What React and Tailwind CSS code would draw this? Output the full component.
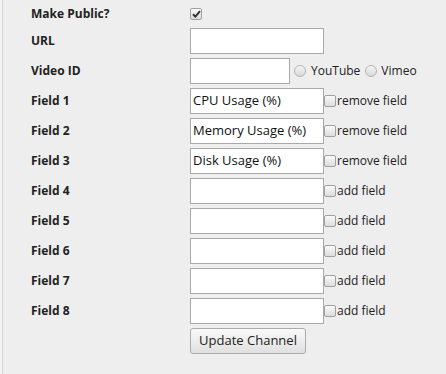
import React from "react";

const font = { fontFamily: '"Open Sans", sans-serif' };

function Box({ checked }) {
  return (
    <span className="inline-flex h-[12px] w-[12px] shrink-0 items-center justify-center rounded-[2px] border border-[#a0a0a0] bg-gradient-to-b from-[#fafafa] to-[#dcdcdc]">
      {checked && (
        <svg width="9" height="8" viewBox="0 0 9 8">
          <path d="M1 4.2 L3.4 6.6 L8 1.2" stroke="#333" strokeWidth="2" fill="none" />
        </svg>
      )}
    </span>
  );
}

function Radio() {
  return (
    <span className="inline-block h-[12px] w-[12px] shrink-0 rounded-full border border-[#b4b4b4] bg-gradient-to-b from-[#f6f6f6] to-[#d8d8d8]" />
  );
}

function Label({ children }) {
  return (
    <div className="w-[159px] shrink-0 text-[12px] font-bold text-[#222]">{children}</div>
  );
}

function TextBox({ value = "", w = "w-[134px]" }) {
  return (
    <div
      className={`${w} flex h-[26px] shrink-0 items-center border border-[#a9a9a9] bg-white pl-[2px] text-[13px] text-[#111]`}
    >
      {value}
    </div>
  );
}

const fields = [
  { v: "CPU Usage (%)", a: "remove field" },
  { v: "Memory Usage (%)", a: "remove field" },
  { v: "Disk Usage (%)", a: "remove field" },
  { v: "", a: "add field" },
  { v: "", a: "add field" },
  { v: "", a: "add field" },
  { v: "", a: "add field" },
  { v: "", a: "add field" },
];

export default function App() {
  return (
    <div className="min-h-screen bg-[#f4f4f4] pl-[2px]" style={font}>
      <div className="min-h-screen border-l border-[#d6d6d6] bg-[#eeeeee] pl-[28px]">
        <div className="flex h-[27px] items-center">
          <Label>Make Public?</Label>
          <Box checked />
        </div>
        <div className="mt-[1px] flex flex-col gap-[4px]">
          <div className="flex h-[26px] items-center">
            <Label>URL</Label>
            <TextBox />
          </div>
          <div className="flex h-[26px] items-center">
            <Label>Video ID</Label>
            <TextBox w="w-[100px]" />
            <span className="ml-[4px]"><Radio /></span>
            <span className="ml-[5px] text-[12px] text-[#222]">YouTube</span>
            <span className="ml-[5px]"><Radio /></span>
            <span className="ml-[4px] text-[12px] text-[#222]">Vimeo</span>
          </div>
          {fields.map((f, i) => (
            <div key={i} className="flex h-[26px] items-center">
              <Label>Field {i + 1}</Label>
              <TextBox value={f.v} />
              <Box />
              <span className="ml-[1px] text-[12px] text-[#222]">{f.a}</span>
            </div>
          ))}
          <div className="flex h-[26px] items-center">
            <div className="w-[159px] shrink-0" />
            <button className="flex h-[26px] w-[116px] items-center justify-center rounded-[3px] border border-[#acacac] bg-gradient-to-b from-[#f9f9f9] to-[#e0e0e0] text-[13px] text-[#222]">
              Update Channel
            </button>
          </div>
        </div>
      </div>
    </div>
  );
}
